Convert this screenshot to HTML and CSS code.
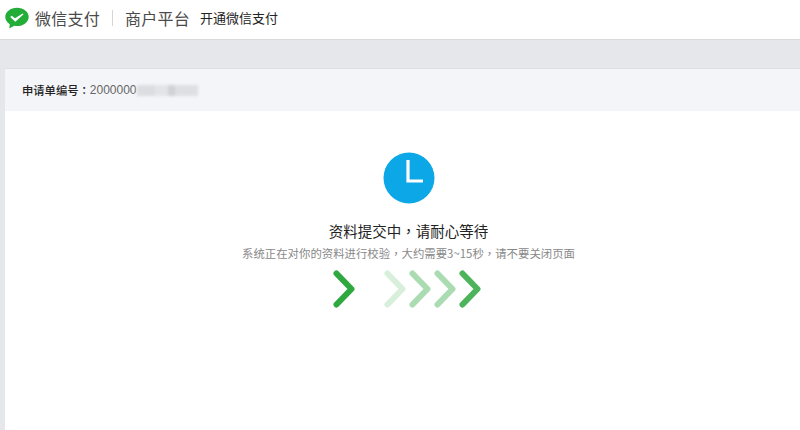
FILE: index.html
```html
<!DOCTYPE html>
<html lang="zh-CN">
<head>
<meta charset="utf-8">
<title>开通微信支付</title>
<link rel="stylesheet" href="styles.css">
</head>
<body>
<header class="topbar">
  <svg class="logo" viewBox="0 0 24 22" width="24" height="22" aria-hidden="true">
    <path d="M12 .8C5.600 .8 .3 4.900 .3 10c0 3 1.800 5.500 4.500 7.200L4.300 21.500l5-2.700c.9 .2 1.800 .3 2.700 .3 6.400 0 11.700-4 11.700-9.100S18.400 .8 12 .8z" fill="#22ac38"/>
    <path d="M5.200 10l1.600-1.200 3.200 2.500 7.700-4.800 .9 .8-8.300 7.500z" fill="#fff"/>
  </svg>
  <span class="brand">微信支付</span>
  <span class="divider"></span>
  <span class="brand">商户平台</span>
  <span class="page-name">开通微信支付</span>
</header>
<main class="stage">
  <section class="panel">
    <div class="panel-head">
      <span class="order-label">申请单编号<span lang="zh-TW">：</span></span><span class="order-no">2000000</span><span class="masked"></span>
    </div>
    <div class="panel-body">
      <svg class="clock" viewBox="0 0 52 52" width="52" height="52" aria-hidden="true">
        <circle cx="26" cy="26" r="25.500" fill="#0ba7e6"/>
        <path d="M25 8V29H40" fill="none" stroke="#fff" stroke-width="3.200"/>
      </svg>
      <h1 class="title">资料提交中<span lang="zh-TW">，</span>请耐心等待</h1>
      <p class="hint">系统正在对你的资料进行校验<span lang="zh-TW">，</span>大约需要3~15秒<span lang="zh-TW">，</span>请不要关闭页面</p>
      <div class="progress">
        <svg class="chev chev-done" viewBox="0 0 22 38" aria-hidden="true"><path d="M3.500 3.500L18.500 19L3.500 34.500"/></svg>
        <div class="steps">
          <svg class="chev chev-1" viewBox="0 0 22 38" aria-hidden="true"><path d="M3.500 3.500L18.500 19L3.500 34.500"/></svg>
          <svg class="chev chev-2" viewBox="0 0 22 38" aria-hidden="true"><path d="M3.500 3.500L18.500 19L3.500 34.500"/></svg>
          <svg class="chev chev-3" viewBox="0 0 22 38" aria-hidden="true"><path d="M3.500 3.500L18.500 19L3.500 34.500"/></svg>
          <svg class="chev chev-4" viewBox="0 0 22 38" aria-hidden="true"><path d="M3.500 3.500L18.500 19L3.500 34.500"/></svg>
        </div>
      </div>
    </div>
  </section>
</main>
</body>
</html>
```
FILE: styles.css
```css
* { box-sizing: border-box; }
html, body { height: 100%; }
body {
  margin: 0;
  display: flex;
  flex-direction: column;
  background: #fff;
  font-family: "Noto Sans CJK SC", "Noto Sans CJK TC", "Liberation Sans", sans-serif;
  overflow: hidden;
}
[lang="zh-TW"] { font-family: "Noto Sans CJK TC", sans-serif; }
.topbar {
  height: 40px;
  flex: none;
  display: flex;
  align-items: center;
  padding: 0 0 4px 5px;
  background: #fff;
  border-bottom: 1px solid #d9dadc;
}
.logo { flex: none; margin-right: 6px; }
.brand {
  font-size: 16px;
  line-height: 22px;
  width: 65px;
  letter-spacing: .25px;
  white-space: nowrap;
  color: #4a4a4a;
}
.divider {
  width: 1px;
  height: 16px;
  margin: 0 12px;
  background: #d5d5d5;
}
.page-name {
  margin-left: 10px;
  font-size: 13px;
  line-height: 22px;
  color: #222;
}
.stage {
  flex: 1;
  display: flex;
  min-height: 0;
  padding: 28px 0 0 5px;
  background: #e6e7ea;
}
.panel {
  flex: 1;
  background: #fff;
}
.panel-head {
  height: 43px;
  display: flex;
  align-items: center;
  padding: 0 0 0 17px;
  background: #f4f5f9;
  border-top: 1px solid #dfe0e3;
  font-size: 11.300px;
}
.order-label { color: #222; font-weight: 500; }
.order-no { color: #666; font-size: 12px; font-family: "Liberation Sans", sans-serif; }
.masked {
  width: 61px;
  height: 11px;
  background: linear-gradient(90deg, #dcdde0 0 30%, #e3e4e7 30% 50%, #d0d1d4 50% 62%, #dedfe2 62% 100%);
  filter: blur(1.500px);
}
.panel-body {
  display: flex;
  flex-direction: column;
  align-items: center;
  padding: 41px 0 0 12px;
}
.clock { display: block; }
.title {
  margin: 16px 0 0;
  font-size: 14.500px;
  line-height: 22px;
  font-weight: 400;
  color: #222;
}
.hint {
  margin: 3px 0 0;
  font-size: 11.400px;
  line-height: 16px;
  color: #888;
}
.progress {
  width: 152px;
  margin-top: 9px;
  display: flex;
  align-items: center;
  gap: 29px;
}
.steps { display: flex; gap: 3px; }
.chev { display: block; width: 22px; height: 38px; }
.chev path {
  fill: none;
  stroke: #2fa83f;
  stroke-width: 6px;
  stroke-linecap: round;
  stroke-linejoin: round;
}
.chev-1 { opacity: .18; }
.chev-2 { opacity: .4; }
.chev-3 { opacity: .4; }
.chev-4 { opacity: .85; }
```
